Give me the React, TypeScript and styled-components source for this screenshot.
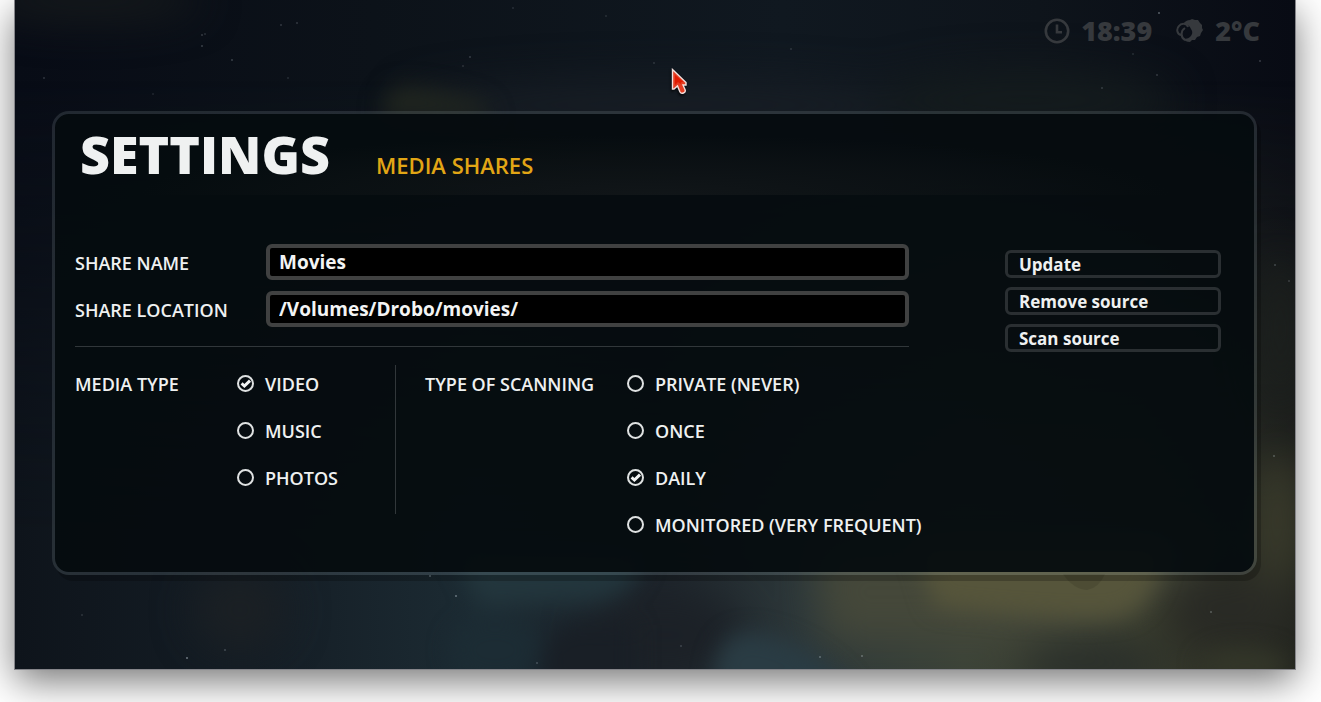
import React from "react";
import styled, { createGlobalStyle } from "styled-components";

const Global = createGlobalStyle`
  *, *::before, *::after { box-sizing: border-box; }
  body {
    margin: 0;
    background: #fff;
    color: #eff1f1;
    font-family: "Open Sans", "Noto Sans", sans-serif;
    font-size: 18px;
    line-height: 24px;
    font-weight: 600;
  }
`;

const Page = styled.div`
  padding: 0 26px 33px 15px;
  overflow: hidden;
`;

const Window = styled.main`
  position: relative;
  isolation: isolate;
  padding: 0 38px 94px 37px;
  background: #0b1119;
  box-shadow: 0 0 0 1px #85858a, 0 12px 36px rgba(0, 0, 0, 0.54);
`;

const Backdrop = styled.svg`
  position: absolute;
  inset: 0;
  z-index: -1;
  width: 100%;
  height: 100%;
`;

const Pointer = styled.svg`
  position: absolute;
  top: 68px;
  left: 656px;
  filter: drop-shadow(-1px 2px 1px rgba(0, 0, 0, 0.6));
`;

const StatusBar = styled.header`
  display: flex;
  justify-content: flex-end;
  gap: 24px;
  height: 111px;
  padding: 14px 0 0;
  margin-right: -3px;
  color: #36393d;
  font-size: 27px;
  font-weight: 800;
  line-height: 34px;
`;

const Status = styled.div`
  display: flex;
  align-items: center;
  height: 34px;
  gap: 11px;
`;

const Panel = styled.section`
  border: 3px solid rgba(150, 165, 170, 0.18);
  border-radius: 17px;
  background: rgba(5, 12, 15, 0.94);
  background-clip: padding-box;
  box-shadow: 4px 6px 0 rgba(0, 0, 0, 0.22);
`;

const PanelHeader = styled.div`
  display: flex;
  align-items: baseline;
  gap: 46px;
  height: 81px;
  padding: 4px 25px 0;
  background: radial-gradient(ellipse 43% 60px at 50% 100%, rgba(24, 28, 30, 0.6), rgba(20, 24, 26, 0.35) 60%, transparent);
`;

const Title = styled.h1`
  margin: 0;
  font-size: 52px;
  line-height: 72px;
  font-weight: 800;
`;

const Section = styled.h2`
  margin: 0;
  color: #e2a615;
  font-size: 22px;
  line-height: 30px;
  font-weight: 600;
`;

const Body = styled.form`
  display: flex;
  align-items: flex-start;
  gap: 96px;
  padding: 49px 33px 36px 20px;
`;

const Main = styled.div`
  flex: 1;
  min-width: 0;
`;

const Fields = styled.div`
  display: grid;
  gap: 11px;
  padding-bottom: 19px;
  border-bottom: 1px solid #31373a;
`;

const Field = styled.div`
  display: flex;
  align-items: center;
`;

const FieldLabel = styled.label`
  flex: none;
  width: 191px;
  padding-top: 2px;
`;

const TextInput = styled.input`
  flex: 1;
  min-width: 0;
  height: 36px;
  padding: 0 9px;
  border: 4px solid #404141;
  border-radius: 6px;
  outline: none;
  background: #000;
  color: #f3f4f4;
  font: inherit;
  font-size: 19px;
  font-weight: 700;
`;

const Options = styled.div`
  display: flex;
  align-items: flex-start;
  padding-top: 18px;
`;

const Group = styled.div<{ $wide?: boolean }>`
  flex: none;
  display: grid;
  grid-template-columns: ${(p) => (p.$wide ? "202px" : "162px")} max-content;
  width: ${(p) => (p.$wide ? "auto" : "321px")};
  padding: 6px 0 0 ${(p) => (p.$wide ? "29px" : "0")};
  height: ${(p) => (p.$wide ? "auto" : "149px")};
  border-right: ${(p) => (p.$wide ? "0" : "1px solid #31373a")};
`;

const Caption = styled.div`
  padding-top: 1px;
`;

const Choices = styled.div`
  display: grid;
  align-content: start;
  gap: 23px;
`;

const Choice = styled.label`
  display: grid;
  grid-template-columns: 17px auto;
  align-items: center;
  column-gap: 11px;
  white-space: nowrap;
`;

const ChoiceText = styled.span`
  padding-top: 1px;
  height: 24px;
`;

const Radio = styled.input`
  grid-area: 1 / 1;
  appearance: none;
  width: 17px;
  height: 17px;
  margin: 0;
  border: 2px solid #dfe2e2;
  border-radius: 50%;

  & + svg {
    grid-area: 1 / 1;
    visibility: hidden;
    pointer-events: none;
  }
  &:checked + svg {
    visibility: visible;
  }
`;

const Actions = styled.div`
  flex: none;
  display: grid;
  gap: 9px;
  width: 216px;
  padding-top: 6px;
`;

const Action = styled.button`
  height: 28px;
  padding: 0 11px;
  border: 3px solid #2a2f32;
  border-radius: 6px;
  background: transparent;
  color: inherit;
  font: inherit;
  font-size: 17px;
  font-weight: 700;
  text-align: left;
`;

const stars: [number, number, number][] = [
  [187, 35, 0.22], [190, 34, 0.16], [187, 46, 0.25], [217, 60, 0.25], [266, 25, 0.2],
  [282, 23, 0.2], [29, 78, 0.2], [138, 94, 0.12], [273, 78, 0.14], [455, 57, 0.22],
  [448, 66, 0.16], [498, 8, 0.14], [591, 16, 0.14], [639, 63, 0.16], [776, 49, 0.16],
  [1144, 13, 0.4], [1245, 61, 0.24], [1142, 75, 0.2], [1087, 88, 0.2], [1118, 54, 0.14],
  [1260, 265, 0.25], [1274, 281, 0.2], [1259, 456, 0.3], [172, 658, 0.5],
  [415, 576, 0.4], [441, 596, 0.45], [67, 615, 0.16], [522, 663, 0.25],
  [805, 657, 0.35], [847, 656, 0.35], [666, 646, 0.2], [1196, 612, 0.3], [210, 650, 0.25],
];

function Nebula() {
  return (
    <Backdrop viewBox="0 0 1280 669" preserveAspectRatio="none" aria-hidden="true">
      <defs>
        <linearGradient id="sky" x1="0" y1="0" x2="1" y2="0">
          <stop offset="0" stopColor="#080c16" />
          <stop offset="0.28" stopColor="#0c1219" />
          <stop offset="0.6" stopColor="#101820" />
          <stop offset="0.8" stopColor="#0e141b" />
          <stop offset="1" stopColor="#080b14" />
        </linearGradient>
        <linearGradient id="ground" x1="0" y1="0" x2="1" y2="0">
          <stop offset="0" stopColor="#0e141b" />
          <stop offset="0.2" stopColor="#151e26" />
          <stop offset="0.36" stopColor="#1c2b33" />
          <stop offset="0.5" stopColor="#1d242b" />
          <stop offset="0.62" stopColor="#2d383a" />
          <stop offset="0.74" stopColor="#3c4338" />
          <stop offset="0.88" stopColor="#3a3d2e" />
          <stop offset="1" stopColor="#23251f" />
        </linearGradient>
        <linearGradient id="fall" x1="0" y1="0" x2="0" y2="1">
          <stop offset="0.12" stopColor="#fff" stopOpacity="0" />
          <stop offset="0.8" stopColor="#fff" />
        </linearGradient>
        <mask id="lower"><rect width="1280" height="669" fill="url(#fall)" /></mask>
        <filter id="soft" x="-60%" y="-60%" width="220%" height="220%" colorInterpolationFilters="sRGB">
          <feGaussianBlur stdDeviation="20" />
        </filter>
        <filter id="mist" x="-60%" y="-60%" width="220%" height="220%" colorInterpolationFilters="sRGB">
          <feGaussianBlur stdDeviation="11" />
        </filter>
      </defs>
      <rect width="1280" height="669" fill="url(#sky)" />
      <rect width="1280" height="669" fill="url(#ground)" mask="url(#lower)" />
      <g filter="url(#soft)">
        <ellipse cx="75" cy="0" rx="110" ry="22" fill="#15191b" />
        <ellipse cx="650" cy="105" rx="260" ry="26" fill="#171d24" />
        <ellipse cx="1010" cy="100" rx="150" ry="30" fill="#141b1d" />
        <ellipse cx="225" cy="610" rx="46" ry="40" fill="#1b2024" />
        <ellipse cx="650" cy="635" rx="80" ry="45" fill="#1c2127" />
        <path d="M800 545H1190Q1130 625 1010 640L810 640Z" fill="#45483a" />
        <ellipse cx="1215" cy="610" rx="65" ry="42" fill="#292a25" />
        <ellipse cx="1080" cy="665" rx="75" ry="26" fill="#292e2a" />
        <ellipse cx="1262" cy="520" rx="24" ry="70" fill="#3b3c2c" />
        <ellipse cx="1265" cy="330" rx="20" ry="80" fill="#1d211e" />
      </g>
      <g filter="url(#mist)">
        <path d="M365 118Q368 84 393 86T466 101L480 118Z" fill="#20251f" />
        <path d="M440 555H630Q622 597 575 602L465 606Z" fill="#23363d" />
        <ellipse cx="480" cy="650" rx="45" ry="33" fill="#1c2c34" />
        <path d="M560 623Q518 630 529 690H620V625Z" fill="#191f26" />
        <path d="M700 692Q695 638 730 632Q790 635 840 692Z" fill="#2a3c44" />
        <path d="M900 545H1150Q1139 609 1105 616T920 607Z" fill="#56553b" />
        <ellipse cx="1230" cy="666" rx="45" ry="18" fill="#333629" />
      </g>
      <path d="M1048 574H1090Q1084 588 1072 590Q1058 589 1048 574Z" fill="#44442e" opacity="0.5" />
      {stars.map(([x, y, o], i) => (
        <circle key={i} cx={x} cy={y} r="1" fill="#c8d3dc" opacity={o} />
      ))}
    </Backdrop>
  );
}

function Option({ name, text, checked }: { name: string; text: string; checked?: boolean }) {
  return (
    <Choice>
      <Radio type="radio" name={name} defaultChecked={checked} />
      <svg width="17" height="17" viewBox="0 0 17 17" aria-hidden="true">
        <path d="M4.6 8.4L7.4 11L13 5.6" fill="none" stroke="#f2f4f4" strokeWidth="3" />
      </svg>
      <ChoiceText>{text}</ChoiceText>
    </Choice>
  );
}

export default function App() {
  return (
    <>
      <Global />
      <Page>
        <Window>
          <Nebula />
          <StatusBar>
            <Status>
              <svg width="26" height="26" viewBox="0 0 26 26" fill="none" stroke="currentColor" aria-hidden="true">
                <circle cx="13" cy="13" r="11.2" strokeWidth="2.6" />
                <path d="M13 6.5V14.3H18" strokeWidth="2.6" />
              </svg>
              18:39
            </Status>
            <Status>
              <svg width="28" height="26" viewBox="0 0 28 26" aria-hidden="true">
                <path d="M7 6Q10 2 14 2L16 1L19 2L22 2L24 5L26 7L26 10L27 12L25 15L24 18L21 19L19 22L16 22L14 24Q9 24 6 20Q11 22 14 19Q18 15 15 11Q13 6 7 6Z" fill="currentColor" />
                <path d="M5 17C1 16 0 11 3 8C5 5 11 5 12 9M9 10C4 13 5 20 9 22" fill="none" stroke="currentColor" strokeWidth="2" />
              </svg>
              2°C
            </Status>
          </StatusBar>
          <Panel>
            <PanelHeader>
              <Title>SETTINGS</Title>
              <Section>MEDIA SHARES</Section>
            </PanelHeader>
            <Body onSubmit={(e: React.FormEvent) => e.preventDefault()}>
              <Main>
                <Fields>
                  <Field>
                    <FieldLabel htmlFor="share-name">SHARE NAME</FieldLabel>
                    <TextInput id="share-name" type="text" defaultValue="Movies" />
                  </Field>
                  <Field>
                    <FieldLabel htmlFor="share-location">SHARE LOCATION</FieldLabel>
                    <TextInput id="share-location" type="text" defaultValue="/Volumes/Drobo/movies/" />
                  </Field>
                </Fields>
                <Options>
                  <Group role="radiogroup" aria-labelledby="media-type">
                    <Caption id="media-type">MEDIA TYPE</Caption>
                    <Choices>
                      <Option name="media" text="VIDEO" checked />
                      <Option name="media" text="MUSIC" />
                      <Option name="media" text="PHOTOS" />
                    </Choices>
                  </Group>
                  <Group $wide role="radiogroup" aria-labelledby="scan-type">
                    <Caption id="scan-type">TYPE OF SCANNING</Caption>
                    <Choices>
                      <Option name="scan" text="PRIVATE (NEVER)" />
                      <Option name="scan" text="ONCE" />
                      <Option name="scan" text="DAILY" checked />
                      <Option name="scan" text="MONITORED (VERY FREQUENT)" />
                    </Choices>
                  </Group>
                </Options>
              </Main>
              <Actions>
                <Action type="button">Update</Action>
                <Action type="button">Remove source</Action>
                <Action type="button">Scan source</Action>
              </Actions>
            </Body>
          </Panel>
          <Pointer width="17" height="28" viewBox="0 0 17 28" aria-hidden="true">
            <path d="M1.5 1.5V21L3 21L6.5 18L9 24Q10 26 12.5 25Q15 24 14 21.5L12 17H15V14.5Z" fill="#e43d22" stroke="#f3dfdc" strokeWidth="1.4" />
            <path d="M4 7V17L7 14L9.5 16L10.5 14L12.5 14Z" fill="#e01a00" />
          </Pointer>
        </Window>
      </Page>
    </>
  );
}
